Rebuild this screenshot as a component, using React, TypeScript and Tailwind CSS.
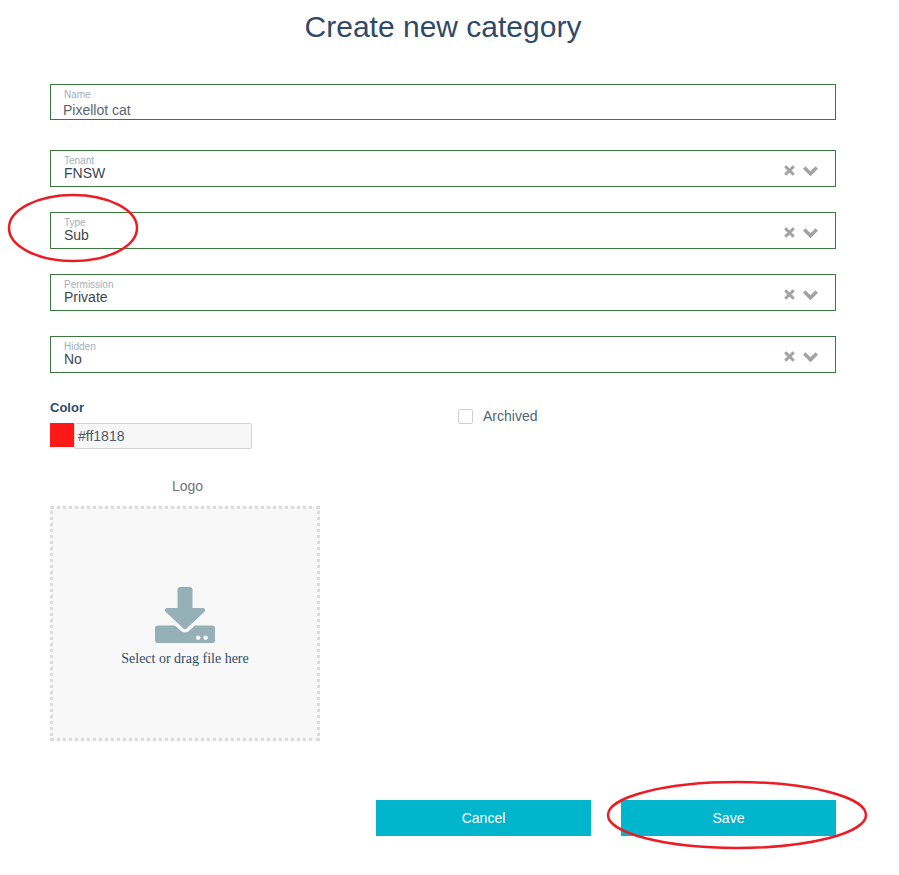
const SELECTS = [
  { label: "Tenant", value: "FNSW" },
  { label: "Type", value: "Sub" },
  { label: "Permission", value: "Private" },
  { label: "Hidden", value: "No" },
];

function SelectIcons() {
  return (
    <div className="absolute right-[17px] top-[14px] flex items-center gap-[8px]">
      <svg width="11" height="11" viewBox="0 0 11 11" fill="none" stroke="#a3a3a3" strokeWidth="3">
        <path d="M1.2 1.2 9.8 9.8M9.8 1.2 1.2 9.8" />
      </svg>
      <svg width="15" height="10" viewBox="0 0 15 10" fill="none" stroke="#a3a3a3" strokeWidth="3.6">
        <path d="M1.2 1.5 7.5 7.8 13.8 1.5" />
      </svg>
    </div>
  );
}

function Annotation({ className, cx, cy, rx, ry }: { className: string; cx: number; cy: number; rx: number; ry: number }) {
  return (
    <svg className={className} fill="none" stroke="#ed1c24" strokeWidth="2.5">
      <ellipse cx={cx} cy={cy} rx={rx} ry={ry} />
    </svg>
  );
}

export default function App() {
  return (
    <div className="relative h-[875px] w-[899px] overflow-hidden bg-white px-[50px] font-['Liberation_Sans',Arial,sans-serif] text-[#3c4f63]">
      <h1 className="h-[84px] w-[786px] pt-[9px] text-center text-[30px] leading-[36px] text-[#2f4a68]">
        Create new category
      </h1>

      {/* Name */}
      <div className="relative h-[36px] w-[786px] border border-[#3a7a3f] pl-[13px]">
        <div className="pt-[5px] text-[10px] leading-[10px] text-[#a3aebb]">Name</div>
        <div className="-ml-px mt-[2px] text-[14px] leading-[16px] text-[#5a6472]">Pixellot cat</div>
      </div>

      {/* Selects */}
      <div className="mt-[30px] flex w-[786px] flex-col gap-[25px]">
        {SELECTS.map((s) => (
          <div key={s.label} className="relative h-[37px] border border-[#3a7a3f] pl-[13px]">
            <div className="pt-[5px] text-[10px] leading-[10px] text-[#a3aebb]">{s.label}</div>
            <div className="-mt-px text-[14px] leading-[16px] text-[#3c4650]">{s.value}</div>
            <SelectIcons />
          </div>
        ))}
      </div>

      {/* Color + archived */}
      <div className="mt-[27px] flex">
        <div className="w-[408px]">
          <div className="text-[13px] font-bold leading-[16px] text-[#2f4a68]">Color</div>
          <div className="mt-[7px] flex items-start">
            <div className="h-[24px] w-[24px] bg-[#ff1818]" />
            <div className="h-[26px] w-[178px] rounded-[2px] border border-[#d3d3d3] bg-[#f7f7f7] pl-[3px] text-[14px] leading-[24px] text-[#4a5a6a]">
              #ff1818
            </div>
          </div>
        </div>
        <div className="mt-[8px] flex h-[16px] items-center">
          <div className="h-[15px] w-[15px] rounded-[2px] border border-[#cfcfcf] bg-white" />
          <span className="ml-[10px] text-[14px] leading-[16px] text-[#4f6478]">Archived</span>
        </div>
      </div>

      {/* Logo */}
      <div className="mt-[29px] w-[275px] text-center text-[14px] leading-[16px] text-[#6d7680]">Logo</div>
      <div className="mt-[12px] flex h-[235px] w-[270px] flex-col items-center border-[3px] border-dotted border-[#dcdcdc] bg-[#f8f8f8] pt-[78px]">
        <svg width="60" height="56" viewBox="0 0 512 512" preserveAspectRatio="none" fill="#95b0b6">
          <path d="M216 0h80c13.3 0 24 10.7 24 24v168h87.7c17.8 0 26.7 21.5 14.1 34.1L269.7 378.3c-7.5 7.5-19.8 7.5-27.3 0L90.1 226.1c-12.6-12.6-3.7-34.1 14.1-34.1H192V24c0-13.3 10.7-24 24-24zm296 376v112c0 13.3-10.7 24-24 24H24c-13.3 0-24-10.7-24-24V376c0-13.3 10.7-24 24-24h146.7l49 49c20.1 20.1 52.5 20.1 72.6 0l49-49H488c13.3 0 24 10.7 24 24zm-124 88c0-11-9-20-20-20s-20 9-20 20 9 20 20 20 20-9 20-20zm64 0c0-11-9-20-20-20s-20 9-20 20 9 20 20 20 20-9 20-20z" />
        </svg>
        <div className="mt-[8px] font-['Liberation_Serif',serif] text-[14px] leading-[16px] text-[#2f4a68]">
          Select or drag file here
        </div>
      </div>

      {/* Buttons */}
      <div className="mt-[59px] flex w-[786px] justify-end gap-[30px]">
        <button className="h-[36px] w-[215px] bg-[#00b5cc] text-[14px] text-white">Cancel</button>
        <button className="h-[36px] w-[215px] bg-[#00b5cc] text-[14px] text-white">Save</button>
      </div>

      {/* Hand-drawn annotations on top of the form */}
      <Annotation className="absolute left-0 top-[190px] h-[80px] w-[145px]" cx={73} cy={38} rx={64} ry={33} />
      <Annotation className="absolute left-[600px] top-[775px] h-[80px] w-[275px]" cx={137} cy={40} rx={129} ry={33} />
    </div>
  );
}
